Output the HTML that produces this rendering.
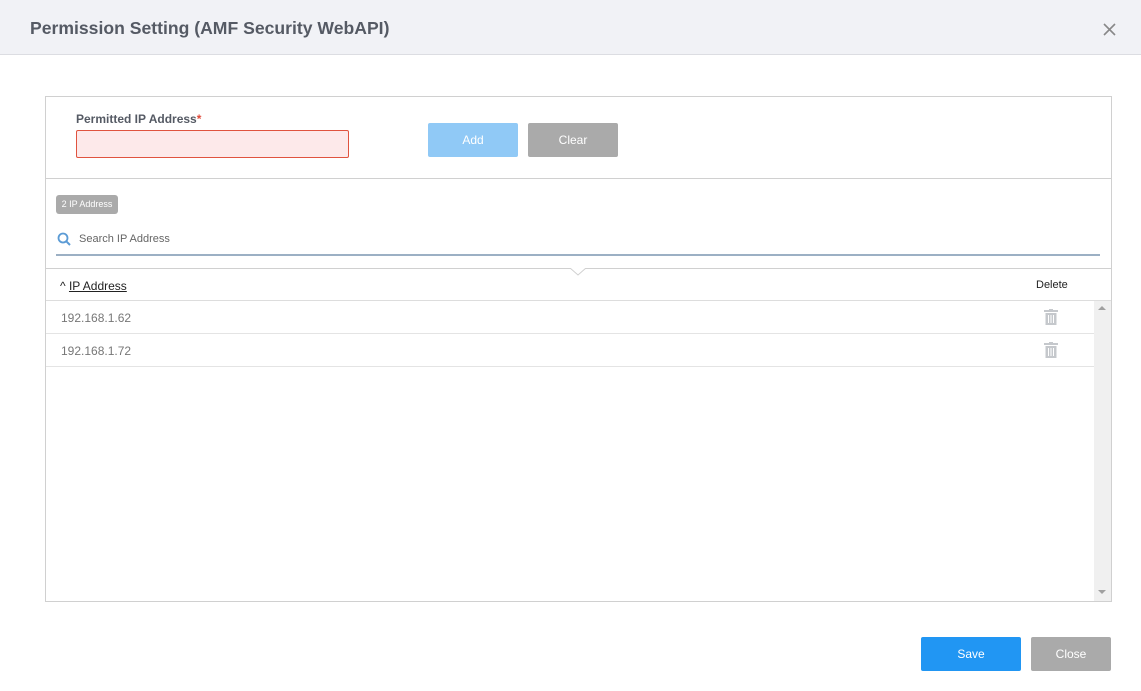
<!DOCTYPE html>
<html><head><style>
*{box-sizing:border-box;margin:0;padding:0}
body{width:1141px;height:691px;background:#fff;font-family:"Liberation Sans",sans-serif;position:relative;overflow:hidden}
.a{position:absolute}
</style></head><body>
<div class="a" style="left:0;top:0;width:1141px;height:55px;background:#f1f2f6;border-bottom:1px solid #dcdde2"></div>
<div class="a" style="left:30px;top:18px;font-size:17.6px;font-weight:bold;color:#555a64">Permission Setting (AMF Security WebAPI)</div>
<svg class="a" style="left:1103px;top:23px" width="13" height="13"><path d="M1 1L12 12M12 1L1 12" stroke="#888" stroke-width="1.6"/></svg>
<div class="a" style="left:45px;top:96px;width:1067px;height:506px;border:1px solid #d0d0d0"></div>
<div class="a" style="left:76px;top:112px;font-size:12px;font-weight:bold;color:#555a64">Permitted IP Address<span style="color:#e04a3a">*</span></div>
<div class="a" style="left:76px;top:130px;width:273px;height:28px;background:#fde9ea;border:1px solid #e0533f;border-radius:2px"></div>
<div class="a" style="left:428px;top:123px;width:90px;height:34px;background:#90c9f6;border-radius:2px;color:#fff;font-size:12px;text-align:center;line-height:34px">Add</div>
<div class="a" style="left:528px;top:123px;width:90px;height:34px;background:#aaa;border-radius:2px;color:#fff;font-size:12px;text-align:center;line-height:34px">Clear</div>
<div class="a" style="left:46px;top:178px;width:1065px;height:1px;background:#d0d0d0"></div>
<div class="a" style="left:56px;top:195px;width:62px;height:19px;background:#aaa;border-radius:3px;color:#fff;font-size:9px;line-height:19px;text-align:center">2 IP Address</div>
<svg class="a" style="left:57px;top:232px" width="15" height="15" viewBox="0 0 15 15"><circle cx="6" cy="6" r="4.5" fill="none" stroke="#5b9bd5" stroke-width="1.8"/><line x1="9.3" y1="9.3" x2="13" y2="13" stroke="#5b9bd5" stroke-width="2"/></svg>
<div class="a" style="left:79px;top:233px;font-size:11px;color:#666">Search IP Address</div>
<div class="a" style="left:56px;top:254px;width:1044px;height:2px;background:#9cb0c4"></div>
<div class="a" style="left:46px;top:268px;width:1065px;height:1px;background:#d0d0d0"></div>
<svg class="a" style="left:570px;top:268px" width="16" height="9"><polyline points="0,0 8,7 16,0" fill="#fff" stroke="#d0d0d0"/></svg>
<div class="a" style="left:60px;top:279px;font-size:12px;color:#222">^ <u>IP Address</u></div>
<div class="a" style="left:1036px;top:279px;font-size:11px;color:#222">Delete</div>
<div class="a" style="left:46px;top:300px;width:1065px;height:1px;background:#ddd"></div>
<div class="a" style="left:61px;top:311px;font-size:12px;color:#777">192.168.1.62</div>
<div class="a" style="left:46px;top:333px;width:1048px;height:1px;background:#e4e4e4"></div>
<div class="a" style="left:61px;top:344px;font-size:12px;color:#777">192.168.1.72</div>
<div class="a" style="left:46px;top:366px;width:1048px;height:1px;background:#e4e4e4"></div>
<svg class="a" style="left:1044px;top:309px" width="14" height="16" viewBox="0 0 14 16"><rect x="0" y="1" width="14" height="2" fill="#c5c8cc"/><rect x="5" y="0" width="4" height="2" fill="#c5c8cc"/><path d="M1.5 4h11v12h-11z" fill="#c5c8cc"/><path d="M4.5 6v8M7 6v8M9.5 6v8" stroke="#fff" stroke-width="1"/></svg>
<svg class="a" style="left:1044px;top:342px" width="14" height="16" viewBox="0 0 14 16"><rect x="0" y="1" width="14" height="2" fill="#c5c8cc"/><rect x="5" y="0" width="4" height="2" fill="#c5c8cc"/><path d="M1.5 4h11v12h-11z" fill="#c5c8cc"/><path d="M4.5 6v8M7 6v8M9.5 6v8" stroke="#fff" stroke-width="1"/></svg>
<div class="a" style="left:1094px;top:301px;width:17px;height:300px;background:#f0f0f0"></div>
<div class="a" style="left:1098px;top:306px;border:4px solid transparent;border-bottom:4px solid #a0a0a0;border-top:0"></div>
<div class="a" style="left:1098px;top:590px;border:4px solid transparent;border-top:4px solid #a0a0a0;border-bottom:0"></div>
<div class="a" style="left:921px;top:637px;width:100px;height:34px;background:#2196f3;border-radius:2px;color:#fff;font-size:12px;text-align:center;line-height:34px">Save</div>
<div class="a" style="left:1031px;top:637px;width:80px;height:34px;background:#aaa;border-radius:2px;color:#fff;font-size:12px;text-align:center;line-height:34px">Close</div>
</body></html>
